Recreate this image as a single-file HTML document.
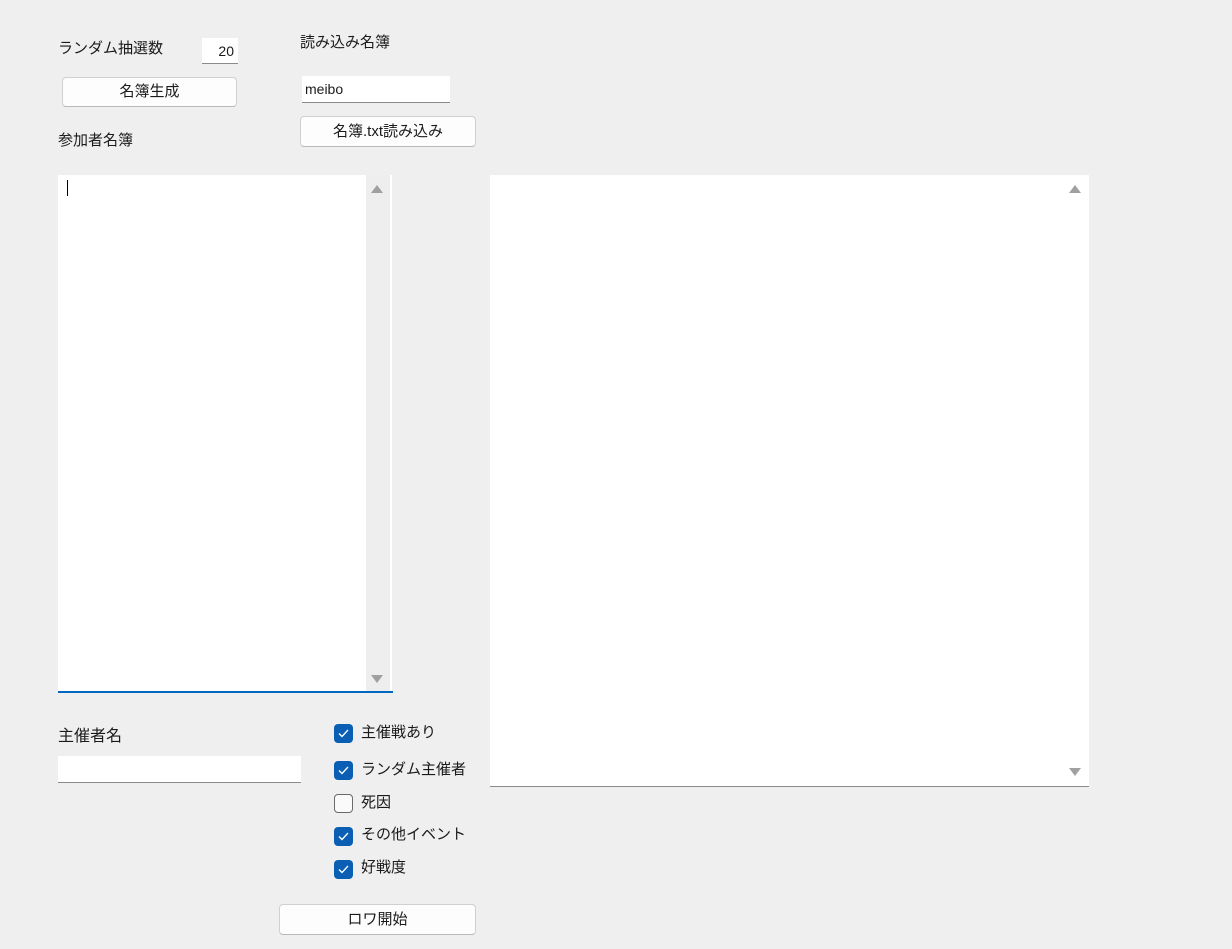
<!DOCTYPE html>
<html><head><meta charset="utf-8"><style>
body{margin:0;width:1232px;height:949px;background:#efefef;position:relative;overflow:hidden;font-family:"Liberation Sans","Noto Sans CJK JP",sans-serif;color:#1a1a1a}
.a{position:absolute}
.t{font-size:15px;line-height:18px;white-space:nowrap}
.btn{background:#fdfdfd;border:1px solid #d0d0d0;border-bottom-color:#b8b8b8;border-radius:4px;box-sizing:border-box;text-align:center;font-size:15px}
.tb{background:#fff;border-bottom:1px solid #8a8a8a;box-sizing:border-box;font-size:14px}
.cb{width:19px;height:19px;border-radius:4px;background:#0a5fb4;box-sizing:border-box}
.cb svg{position:absolute;left:4px;top:5px}
.un{background:#fafafa;border:1px solid #6a6a6a}
.sb{background:#eeeeee}
.tri{width:0;height:0;border-left:6px solid transparent;border-right:6px solid transparent}
</style></head><body>
<div class="a t" style="left:58px;top:40px">ランダム抽選数</div>
<div class="a tb" style="left:202px;top:38px;width:36px;height:26px;text-align:right;padding-right:4px;line-height:26px">20</div>
<div class="a t" style="left:300px;top:34px">読み込み名簿</div>
<div class="a btn" style="left:62px;top:77px;width:175px;height:30px;line-height:28px">名簿生成</div>
<div class="a tb" style="left:302px;top:76px;width:148px;height:27px;line-height:26px;padding-left:3px">meibo</div>
<div class="a btn" style="left:300px;top:116px;width:176px;height:31px;line-height:29px">名簿.txt読み込み</div>
<div class="a t" style="left:58px;top:132px">参加者名簿</div>

<div class="a" style="left:58px;top:175px;width:334px;height:516px;background:#fff"></div>
<div class="a sb" style="left:366px;top:175px;width:24px;height:516px"></div>
<div class="a tri" style="left:371px;top:185px;border-bottom:8px solid #a0a0a0"></div>
<div class="a tri" style="left:371px;top:675px;border-top:8px solid #a0a0a0"></div>
<div class="a" style="left:58px;top:691px;width:335px;height:2px;background:#0067c0"></div>
<div class="a" style="left:67px;top:180px;width:1px;height:16px;background:#000"></div>

<div class="a" style="left:490px;top:175px;width:599px;height:612px;background:#fff;border-bottom:1px solid #8a8a8a;box-sizing:border-box"></div>
<div class="a sb" style="left:1063px;top:175px;width:24px;height:611px;background:#fff"></div>
<div class="a tri" style="left:1069px;top:185px;border-bottom:8px solid #a0a0a0"></div>
<div class="a tri" style="left:1069px;top:768px;border-top:8px solid #a0a0a0"></div>

<div class="a t" style="left:58px;top:728px;font-size:16px">主催者名</div>
<div class="a tb" style="left:58px;top:756px;width:243px;height:27px"></div>

<div class="a cb" style="left:334px;top:724px"><svg width="11" height="9"><path d="M1 4.5 L4 7.5 L10 1" stroke="#fff" stroke-width="1.3" fill="none"/></svg></div>
<div class="a t" style="left:361px;top:724px">主催戦あり</div>
<div class="a cb" style="left:334px;top:761px"><svg width="11" height="9"><path d="M1 4.5 L4 7.5 L10 1" stroke="#fff" stroke-width="1.3" fill="none"/></svg></div>
<div class="a t" style="left:361px;top:761px">ランダム主催者</div>
<div class="a cb un" style="left:334px;top:794px"></div>
<div class="a t" style="left:361px;top:794px">死因</div>
<div class="a cb" style="left:334px;top:827px"><svg width="11" height="9"><path d="M1 4.5 L4 7.5 L10 1" stroke="#fff" stroke-width="1.3" fill="none"/></svg></div>
<div class="a t" style="left:361px;top:826px">その他イベント</div>
<div class="a cb" style="left:334px;top:860px"><svg width="11" height="9"><path d="M1 4.5 L4 7.5 L10 1" stroke="#fff" stroke-width="1.3" fill="none"/></svg></div>
<div class="a t" style="left:361px;top:859px">好戦度</div>

<div class="a btn" style="left:279px;top:904px;width:197px;height:31px;line-height:29px">ロワ開始</div>
</body></html>
